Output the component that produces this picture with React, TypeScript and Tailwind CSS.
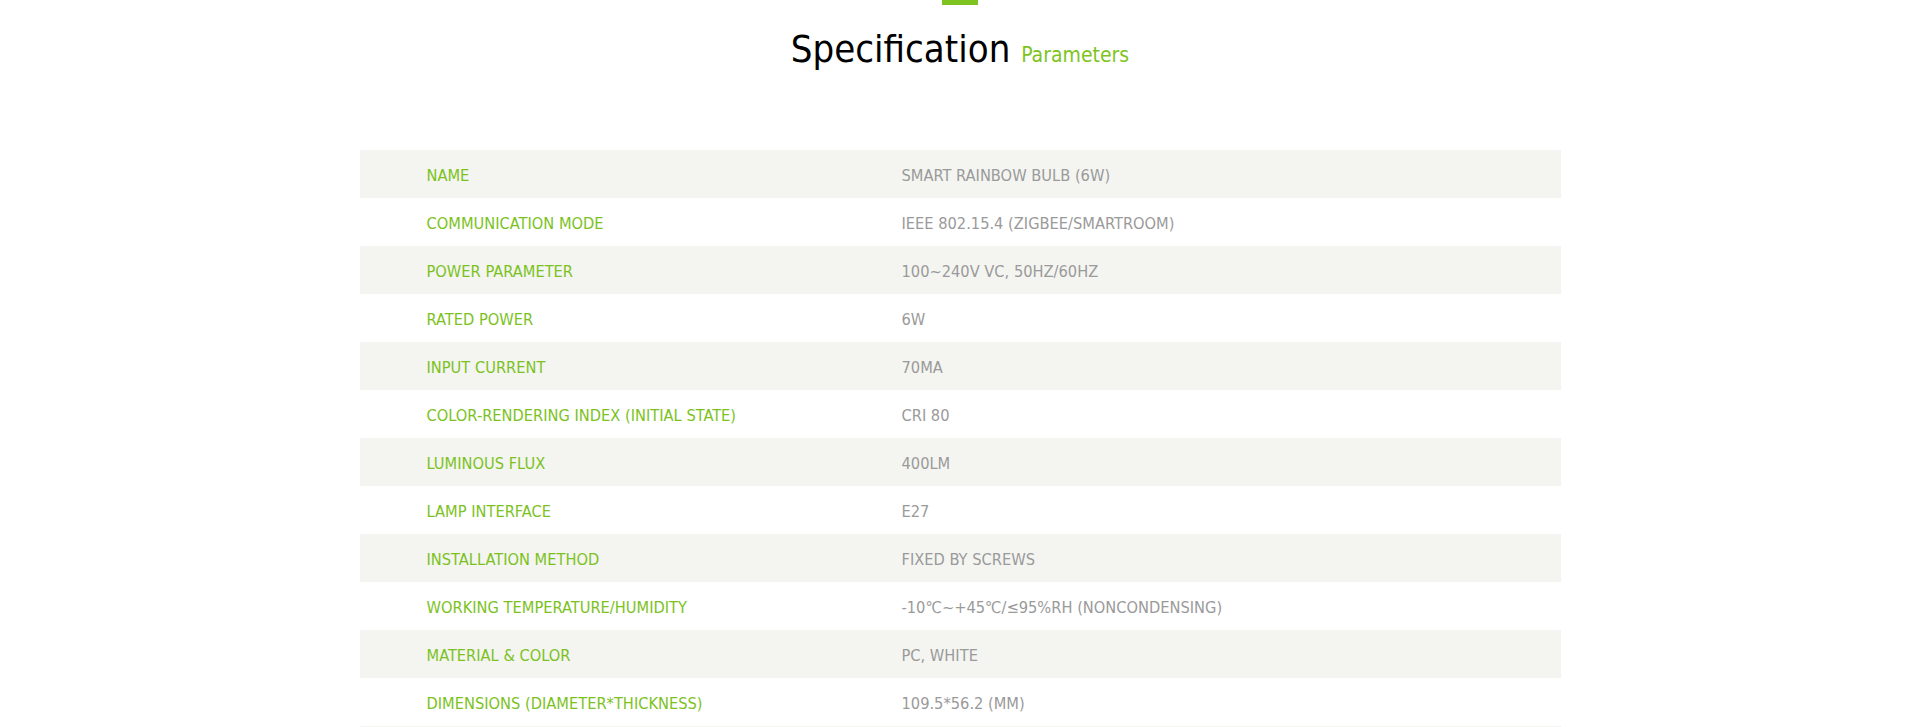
const specs: [string, string][] = [
  ['NAME', 'SMART RAINBOW BULB (6W)'],
  ['COMMUNICATION MODE', 'IEEE 802.15.4 (ZIGBEE/SMARTROOM)'],
  ['POWER PARAMETER', '100~240V VC, 50HZ/60HZ'],
  ['RATED POWER', '6W'],
  ['INPUT CURRENT', '70MA'],
  ['COLOR-RENDERING INDEX (INITIAL STATE)', 'CRI 80'],
  ['LUMINOUS FLUX', '400LM'],
  ['LAMP INTERFACE', 'E27'],
  ['INSTALLATION METHOD', 'FIXED BY SCREWS'],
  ['WORKING TEMPERATURE/HUMIDITY', '-10℃~+45℃/≤95%RH (NONCONDENSING)'],
  ['MATERIAL & COLOR', 'PC, WHITE'],
  ['DIMENSIONS (DIAMETER*THICKNESS)', '109.5*56.2 (MM)'],
]

export default function App() {
  return (
    <div className="min-h-screen bg-white font-['DejaVu_Sans_Condensed','DejaVu_Sans',sans-serif] font-stretch-condensed">
      <div className="flex flex-col items-center">
        <div className="w-[36px] h-[5px] bg-[#7ec421]" />
        <h2 className="mt-[25px] leading-none text-[38px] text-black">
          Specification <span className="text-[21px] text-[#7ec421]">Parameters</span>
        </h2>
      </div>

      <div className="mx-auto mt-[82px] w-[1201px]">
        {specs.map(([label, value], i) => (
          <div
            key={label}
            className={`flex items-center h-[48px] pt-[4px] text-[16.3px] ${i % 2 === 0 ? 'bg-[#f4f5f1]' : 'bg-white'}`}
          >
            <div className="w-[542px] pl-[67px] text-[#7cc21e]">{label}</div>
            <div className="text-[#9a9a9a]">{value}</div>
          </div>
        ))}
        <div className="h-[2px] bg-[#f4f5f1]" />
      </div>
    </div>
  )
}
